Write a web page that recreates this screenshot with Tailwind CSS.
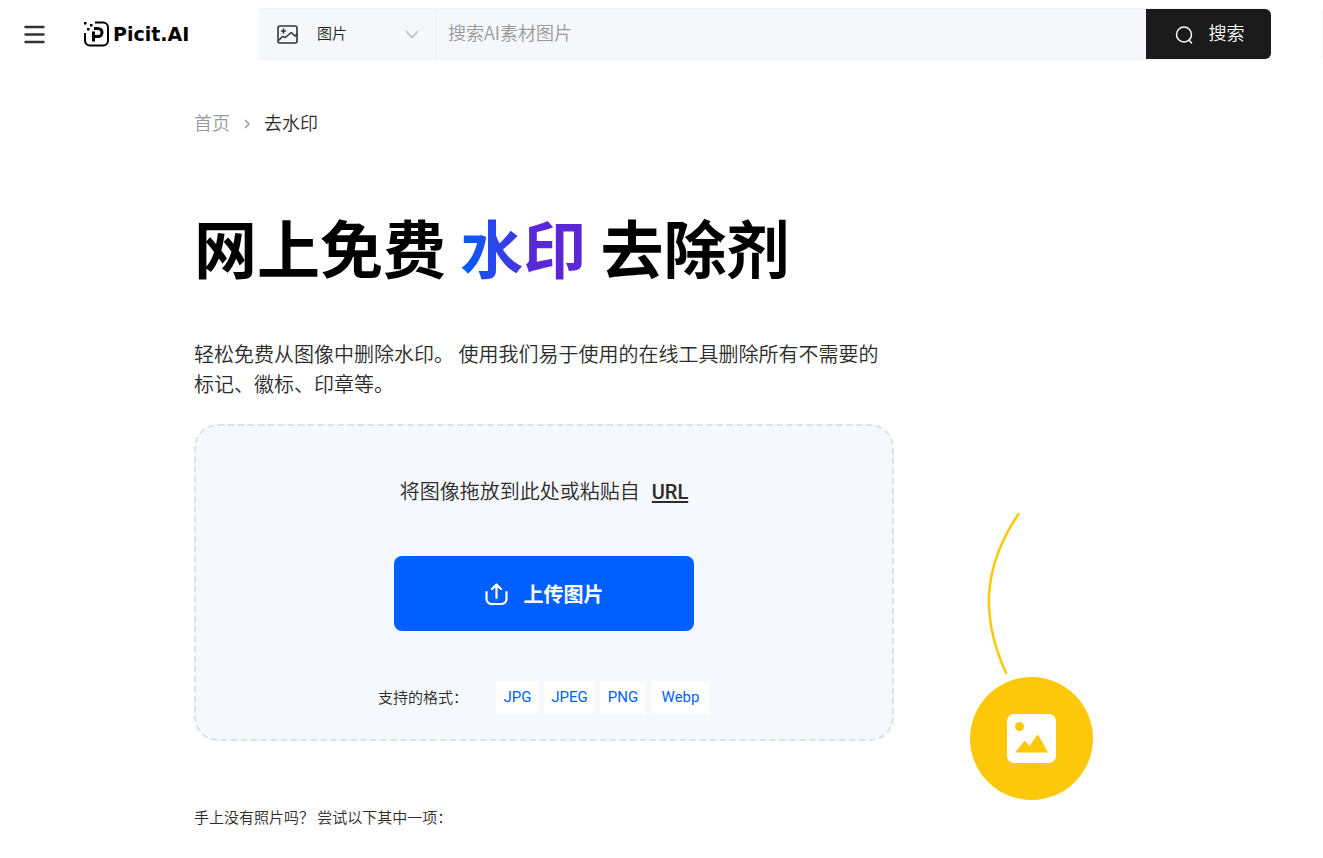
<!DOCTYPE html>
<html lang="zh-CN">
<head>
  <meta charset="UTF-8">
  <meta name="viewport" content="width=device-width, initial-scale=1.0">
  <title>去水印 - Picit.AI</title>
  <script src="https://cdn.jsdelivr.net/npm/@tailwindcss/browser@4"></script>
</head>
<body class="bg-white text-[#2b2b2b] font-[350] font-['Noto_Sans_CJK_SC',sans-serif]">

  <!-- Header -->
  <header class="flex items-center pt-2">
    <button type="button" aria-label="菜单" class="ml-6 shrink-0">
      <svg class="block" width="21" height="20" viewBox="0 0 21 20" fill="none" stroke="#333" stroke-width="2.4" stroke-linecap="round">
        <path d="M1.5 3h18M1.5 10.5h18M1.5 18h18"/>
      </svg>
    </button>
    <a href="#" class="ml-[38px] w-[176px] flex items-center gap-1 shrink-0 text-black">
      <svg width="26" height="26" viewBox="0 0 26 26" fill="none" stroke="#000" stroke-width="2">
        <path d="M12 1.5h8a5 5 0 0 1 5 5v13a5 5 0 0 1-5 5H7a5 5 0 0 1-5-5V12"/>
        <path d="M10.5 20.5v-10M11 7.5h4a4 4 0 0 1 0 8h-4.5" stroke-width="3"/>
        <path d="M1 1h2.5v2.5H1zM7 3h2.5v2.5H7zM4 7h2.5v2.5H4z" fill="#000" stroke="none"/>
      </svg>
      <span class="text-[19px] leading-6 font-bold font-['DejaVu_Sans',sans-serif]">Picit.AI</span>
    </a>
    <form class="flex flex-1 h-[52px] bg-[#f5f7fa] border-y border-[#f2f3f5]" onsubmit="return false">
      <div class="relative w-[177px] border-r border-[#eff0f2]">
        <svg class="absolute left-[18px] top-4 pointer-events-none" width="21" height="19" viewBox="0 0 21 19" fill="none" stroke="#333" stroke-width="1.6" stroke-linecap="round" stroke-linejoin="round">
          <rect x="1" y="1" width="19" height="17" rx="2"/>
          <path d="M2 15l3-3q1-.8 2 0t2 0l4.5-4q.8-.6 1.6.2T18 11l2-1.5M6.500 4v4M4.500 6h4"/>
        </svg>
        <select aria-label="素材类型" class="appearance-none w-full h-full pl-[58px] pr-8 pb-0.5 text-[15px] text-[#222] bg-transparent outline-none">
          <option>图片</option>
        </select>
        <svg class="absolute right-4 top-[21px] pointer-events-none" width="14" height="9" viewBox="0 0 14 9" fill="none" stroke="#b4b8bf" stroke-width="1.2">
          <path d="M1 1l6 6.5L13 1"/>
        </svg>
      </div>
      <input type="text" aria-label="搜索" placeholder="搜索AI素材图片" class="flex-1 min-w-0 px-3 pb-1 text-lg bg-transparent outline-none placeholder:text-[#999]">
      <button type="submit" class="w-[125px] pl-0.5 flex items-center justify-center gap-4 bg-[#1a1a1a] text-white text-lg rounded-r-md">
        <svg width="18" height="19" viewBox="0 0 18 19" fill="none" stroke="#fff" stroke-width="1.5" stroke-linecap="round">
          <circle cx="9" cy="9.5" r="7.5"/>
          <path d="M14 15l2.5 3"/>
        </svg>
        <span class="pb-1">搜索</span>
      </button>
    </form>
    <div class="ml-[51px] w-px h-12 bg-[#f5f5f5]"></div>
  </header>

  <main class="max-w-[935px] mx-auto pt-12">
    <!-- Breadcrumb -->
    <nav class="flex items-center text-lg leading-7">
      <a href="#" class="text-[#999]">首页</a>
      <svg class="mx-3.5 mt-1 w-1.5" width="6" height="10" viewBox="0 0 6 10" fill="none" stroke="#999" stroke-width="1.5">
        <path d="M1 1l4 4-4 4"/>
      </svg>
      <span>去水印</span>
    </nav>

    <div class="flex items-end mt-16">
      <section class="w-[700px]">
        <h1 class="text-[63px] leading-[92px] font-bold text-black">网上免费 <span class="text-transparent bg-clip-text bg-linear-to-r/srgb from-[#005fff] to-[#5b28d5] to-60%">水印</span> 去除剂</h1>
        <p class="mt-[47px] text-xl leading-[30px]">轻松免费从图像中删除水印。 使用我们易于使用的在线工具删除所有不需要的标记、徽标、印章等。</p>

        <!-- Drop zone -->
        <div class="mt-[25px] pt-[47px] pb-[25px] flex flex-col items-center gap-[50px] bg-[#f5f8fd] border-2 border-dashed border-[#e1e1e1] rounded-3xl">
          <p class="pt-1 text-xl leading-7">将图像拖放到此处或粘贴自<a href="#" class="ml-3 font-medium font-['Roboto',sans-serif] underline underline-offset-2 decoration-2">URL</a></p>
          <button type="button" class="w-[300px] h-[75px] flex items-center justify-center gap-4 bg-[#005fff] text-white text-xl font-bold rounded-lg">
            <svg width="23" height="22" viewBox="0 0 23 22" fill="none" stroke="#fff" stroke-width="2.2" stroke-linecap="round" stroke-linejoin="round">
              <path d="M1.5 9v7a5 5 0 0 0 5 5h10a5 5 0 0 0 5-5V9M11.5 15V1.5M7 6l4.5-4.5L16 6"/>
            </svg>
            上传图片
          </button>
          <div class="flex items-center text-[15px]">
            <span class="mr-7">支持的格式：</span>
            <ul class="flex gap-[5px] leading-[33px] text-center text-[#005fff] font-normal font-['Roboto',sans-serif]">
              <li class="w-[43px] bg-white">JPG</li>
              <li class="w-[51px] bg-white">JPEG</li>
              <li class="w-[46px] bg-white">PNG</li>
              <li class="w-[59px] bg-white">Webp</li>
            </ul>
          </div>
        </div>

        <p class="mt-16 text-[15px] leading-6">手上没有照片吗？ 尝试以下其中一项：</p>
      </section>

      <!-- Yellow picture badge -->
      <svg class="ml-[76px] mb-[29px] shrink-0" width="123" height="290" viewBox="0 0 123 290" fill="none">
        <path d="M48.5 4C12 58 11 108 36 163" stroke="#fec80a" stroke-width="2.5" stroke-linecap="round"/>
        <circle cx="61.5" cy="228.5" r="61.5" fill="#fec80a"/>
        <rect x="37" y="204" width="49" height="49" rx="7" fill="#fff"/>
        <circle cx="49.5" cy="216.5" r="4.5" fill="#fec80a"/>
        <path d="M45 242.5l9-11q.8-.8 1.6 0l4 4.5 7-10.5q1-1 2 0l9.5 17z" fill="#fec80a"/>
      </svg>
    </div>
  </main>

</body>
</html>
